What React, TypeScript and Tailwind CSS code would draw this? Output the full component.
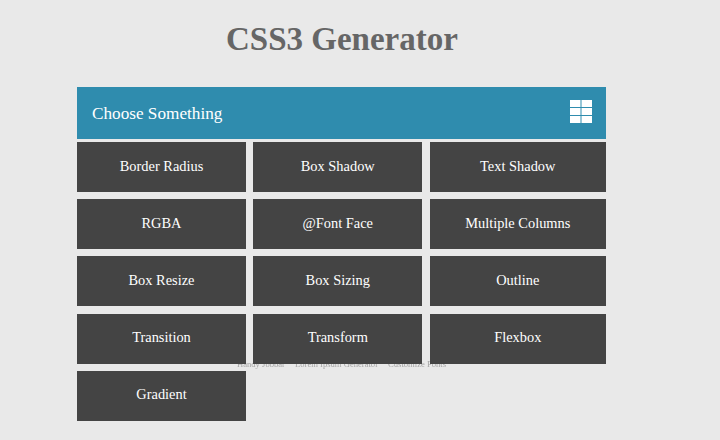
const items = [
  "Border Radius",
  "Box Shadow",
  "Text Shadow",
  "RGBA",
  "@Font Face",
  "Multiple Columns",
  "Box Resize",
  "Box Sizing",
  "Outline",
  "Transition",
  "Transform",
  "Flexbox",
  "Gradient",
]

function GridIcon() {
  return (
    <svg className="mb-[4px]" width="22" height="23" viewBox="0 0 22 23" fill="#ffffff">
      <rect x="0" y="0" width="10.5" height="7" />
      <rect x="11.5" y="0" width="10.5" height="7" />
      <rect x="0" y="8" width="10.5" height="7" />
      <rect x="11.5" y="8" width="10.5" height="7" />
      <rect x="0" y="16" width="10.5" height="7" />
      <rect x="11.5" y="16" width="10.5" height="7" />
    </svg>
  )
}

export default function App() {
  return (
    <div className="relative h-[440px] w-[720px] overflow-hidden bg-[#e9e9e9] font-['Liberation_Serif',serif]">
      <h1 className="pl-[226px] pt-[17px] text-[33px] leading-[44px] font-bold text-[#666666]">CSS3 Generator</h1>

      <div className="relative z-10 ml-[77px] mt-[26px] w-[529px]">
        <div className="flex h-[52px] items-center justify-between bg-[#2f8cae] pl-[15px] pr-[14px] text-[17.2px] text-white">
          <span className="mt-[1px]">Choose Something</span>
          <GridIcon />
        </div>
        <div className="mt-[3px] grid grid-cols-[169px_169px_176.5px] gap-x-[7.25px] gap-y-[7.2px]">
          {items.map((item) => (
            <div key={item} className="flex h-[50px] items-center justify-center bg-[#444444] text-[14.4px] text-white">
              <span className="mb-[1px]">{item}</span>
            </div>
          ))}
        </div>
      </div>

      {/* footer links, mostly hidden behind the rows */}
      <div className="absolute left-[237px] top-[359px] flex gap-[10px] text-[8.6px] leading-[10px] text-[#a5a5a5] blur-[0.4px]">
        <span>Handy Jobbar</span>
        <span>Lorem Ipsum Generator</span>
        <span>Customize Fonts</span>
      </div>
    </div>
  )
}
